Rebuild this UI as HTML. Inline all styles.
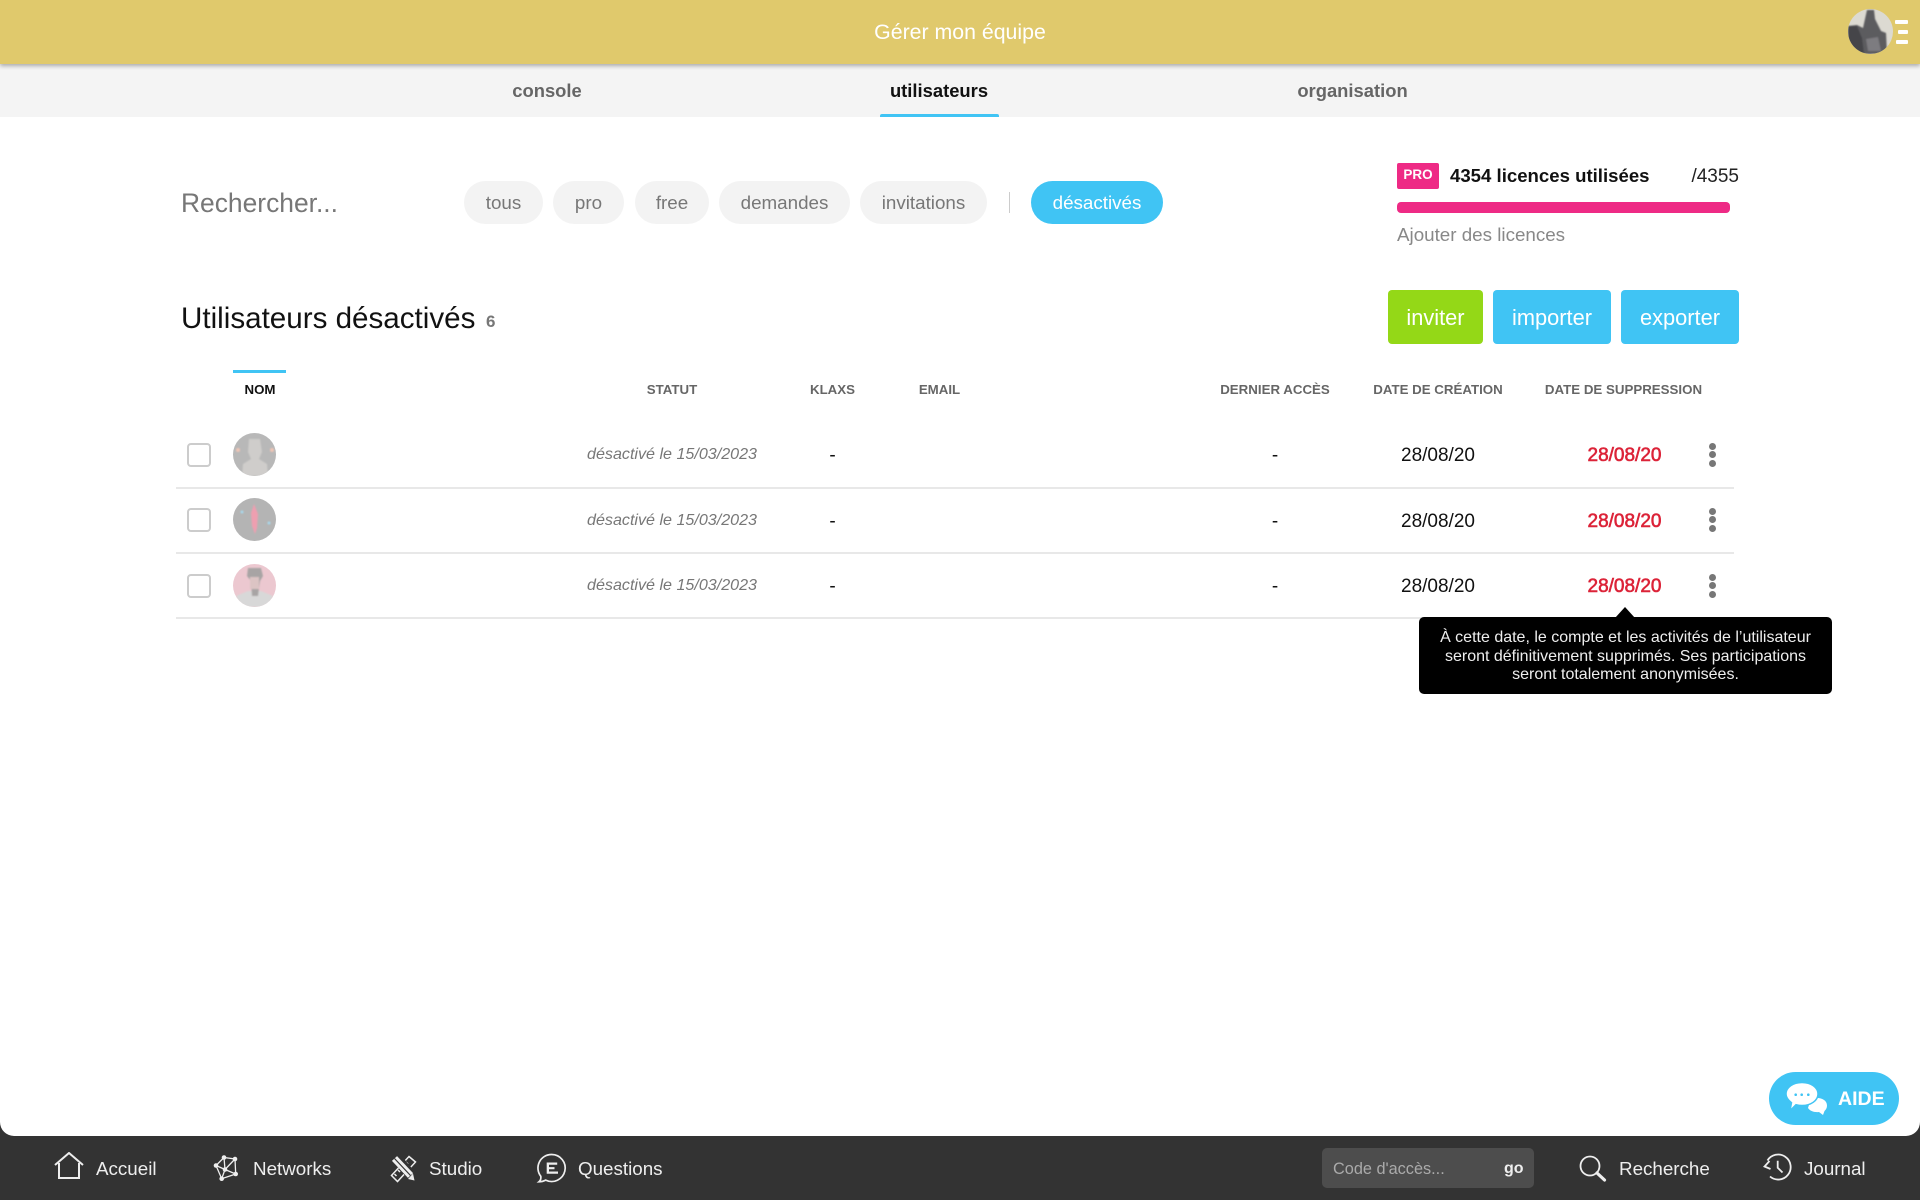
<!DOCTYPE html>
<html lang="fr"><head><meta charset="utf-8"><title>Gérer mon équipe</title>
<style>
html,body{margin:0;padding:0;width:1920px;height:1200px;overflow:hidden;background:#333}
body{position:relative;font-family:"Liberation Sans",sans-serif}
*{box-sizing:border-box}
.a{position:absolute;white-space:nowrap}
.t{position:absolute;white-space:nowrap;height:30px;line-height:30px}
.c{transform:translateX(-50%)}
.pill{position:absolute;top:181px;height:43px;border-radius:22px;background:#f3f3f3;color:#777;font-size:18.800px;line-height:44px;text-align:center}
.btn{position:absolute;top:290px;height:54px;border-radius:4px;background:#40c4f4;color:#fff;font-size:21.800px;line-height:55px;text-align:center}
.th{font-size:13.300px;font-weight:bold;color:#666}
.st{font-size:16.100px;font-style:italic;color:#777}
.d{font-size:19px;color:#111}
.r{font-size:19px;color:#dc2338;-webkit-text-stroke:.6px #dc2338}
.sep{position:absolute;left:176px;width:1558px;height:2px;background:#e8e8e8}
.cb{position:absolute;left:187px;width:24px;height:24px;border:2px solid #ccc;border-radius:4px;background:#fff}
.dot{position:absolute;left:1708.500px;width:7px;height:7px;border-radius:50%;background:#777}
.f{font-size:18.800px;color:#eee}
</style></head><body>
<div class="a" style="left:0;top:0;width:1920px;height:1136px;background:#fff;border-radius:0 0 14px 14px"></div>
<div class="a" style="left:0;top:64px;width:1920px;height:53px;background:#f4f4f4"></div>
<div class="a" style="left:0;top:0;width:1920px;height:64px;background:#e0c96c;box-shadow:0 2px 4px rgba(0,0,0,.3)"></div>
<div class="t c" style="left:960px;top:17px;font-size:21.300px;color:#fff">Gérer mon équipe</div>
<svg class="a" style="left:1848px;top:9px" width="45" height="45" viewBox="0 0 45 45"><defs><clipPath id="k"><circle cx="22.500" cy="22.500" r="22.500"/></clipPath><filter id="b"><feGaussianBlur stdDeviation=".7"/></filter></defs><g clip-path="url(#k)"><rect width="45" height="45" fill="#dcdad2"/><g filter="url(#b)"><path d="M19 1h7l1 9 6 12 5 2 1 21H0V17l9-1 6 3z" fill="#5c5b5f"/><path d="M0 17h9l5 12 2 16H0z" fill="#444448"/><path d="M18 30l12-2 3 14H20z" fill="#7d7c80"/></g></g></svg>
<div class="a" style="left:1895px;top:20px;width:13px;height:3.500px;background:#fff;border-radius:1px"></div>
<div class="a" style="left:1898px;top:30px;width:10px;height:3.500px;background:#fff;border-radius:1px"></div>
<div class="a" style="left:1896px;top:40px;width:12px;height:3.500px;background:#fff;border-radius:1px"></div>

<div class="t c" style="left:547px;top:76px;font-size:18.400px;font-weight:bold;color:#666">console</div>
<div class="t c" style="left:939px;top:76px;font-size:18.400px;font-weight:bold;color:#111">utilisateurs</div>
<div class="t c" style="left:1352.500px;top:76px;font-size:18.400px;font-weight:bold;color:#666">organisation</div>
<div class="a" style="left:880px;top:114px;width:119px;height:3px;background:#40c4f4;border-radius:2px 2px 0 0"></div>

<div class="t" style="left:181px;top:188px;font-size:26.400px;color:#777">Rechercher...</div>
<div class="pill" style="left:464px;width:79px">tous</div>
<div class="pill" style="left:553px;width:71px">pro</div>
<div class="pill" style="left:635px;width:74px">free</div>
<div class="pill" style="left:719px;width:131px">demandes</div>
<div class="pill" style="left:860px;width:127px">invitations</div>
<div class="a" style="left:1009px;top:192px;width:1px;height:21px;background:#ccc"></div>
<div class="pill" style="left:1031px;width:132px;background:#40c4f4;color:#fff">désactivés</div>

<div class="a" style="left:1397px;top:163px;width:42px;height:26px;background:#ee2a85;border-radius:2px;color:#fff;font-size:13.500px;font-weight:bold;line-height:24px;text-align:center">PRO</div>
<div class="t" style="left:1450px;top:161px;font-size:18.600px;font-weight:bold;color:#111">4354 licences utilisées</div>
<div class="t" style="right:181px;top:162px;font-size:19px;color:#222">/4355</div>
<div class="a" style="left:1397px;top:202px;width:333px;height:11px;background:#ee2a85;border-radius:4px"></div>
<div class="t" style="left:1397px;top:220px;font-size:18.800px;color:#888">Ajouter des licences</div>

<div class="t" style="left:181px;top:304px;font-size:29.600px;color:#111">Utilisateurs désactivés</div>
<div class="t" style="left:486px;top:307px;font-size:17px;font-weight:bold;color:#777">6</div>
<div class="btn" style="left:1388px;width:95px;background:#94d817">inviter</div>
<div class="btn" style="left:1493px;width:118px">importer</div>
<div class="btn" style="left:1621px;width:118px">exporter</div>

<div class="a" style="left:233px;top:370px;width:53px;height:3px;background:#40c4f4"></div>
<div class="t th c" style="left:260px;top:375px;color:#111">NOM</div>
<div class="t th c" style="left:672px;top:375px">STATUT</div>
<div class="t th c" style="left:832.500px;top:375px">KLAXS</div>
<div class="t th c" style="left:939.500px;top:375px">EMAIL</div>
<div class="t th c" style="left:1275px;top:375px">DERNIER ACCÈS</div>
<div class="t th c" style="left:1438px;top:375px">DATE DE CRÉATION</div>
<div class="t th c" style="left:1623.500px;top:375px">DATE DE SUPPRESSION</div>

<div class="cb" style="top:442.500px"></div>
<svg class="a" style="left:233px;top:433px" width="43" height="43" viewBox="0 0 43 43"><defs><clipPath id="v"><circle cx="21.500" cy="21.500" r="21.500"/></clipPath></defs><g clip-path="url(#v)"><rect width="43" height="43" fill="#b8b8b8"/><g filter="url(#b)"><path d="M16 6h11l2 13-3 7 8 5 1 12H9l1-12 8-5-3-7z" fill="#cfcdcb"/><circle cx="5" cy="17" r="2" fill="#eec5b5"/><circle cx="39" cy="17" r="2" fill="#eec5b5"/></g></g></svg>
<div class="t st c" style="left:672px;top:439px">désactivé le 15/03/2023</div>
<div class="t d c" style="left:832.500px;top:441px">-</div>
<div class="t d c" style="left:1275px;top:441px">-</div>
<div class="t d c" style="left:1438px;top:441px">28/08/20</div>
<div class="t r c" style="left:1624.500px;top:441px">28/08/20</div>
<div class="dot" style="top:443px"></div><div class="dot" style="top:451px"></div><div class="dot" style="top:459.500px"></div>
<div class="sep" style="top:487px"></div>

<div class="cb" style="top:508px"></div>
<svg class="a" style="left:233px;top:498px" width="43" height="43" viewBox="0 0 43 43"><circle cx="21.500" cy="21.500" r="21.500" fill="#b4b4b4"/><g filter="url(#b)"><path d="M21 6l4 10-1 14-2 6-3-8-1-13z" fill="#ee9fb0"/><circle cx="9" cy="14" r="1.500" fill="#a8d8ec"/><circle cx="36" cy="25" r="1.500" fill="#a8d8ec"/></g></svg>
<div class="t st c" style="left:672px;top:505px">désactivé le 15/03/2023</div>
<div class="t d c" style="left:832.500px;top:507px">-</div>
<div class="t d c" style="left:1275px;top:507px">-</div>
<div class="t d c" style="left:1438px;top:507px">28/08/20</div>
<div class="t r c" style="left:1624.500px;top:507px">28/08/20</div>
<div class="dot" style="top:508px"></div><div class="dot" style="top:516px"></div><div class="dot" style="top:524.500px"></div>
<div class="sep" style="top:552px"></div>

<div class="cb" style="top:573.500px"></div>
<svg class="a" style="left:233px;top:564px" width="43" height="43" viewBox="0 0 43 43"><g clip-path="url(#v)"><rect width="43" height="43" fill="#ecc8d0"/><g filter="url(#b)"><path d="M3 32l12-5h13l12 5-5 11H8z" fill="#d8d8d8"/><path d="M15 4h13l2 8-3 5-2 15h-6l-1-15-4-5z" fill="#a8a4a4"/><path d="M17 13h9v12h-9z" fill="#dcc4c4"/></g></g></svg>
<div class="t st c" style="left:672px;top:570px">désactivé le 15/03/2023</div>
<div class="t d c" style="left:832.500px;top:572px">-</div>
<div class="t d c" style="left:1275px;top:572px">-</div>
<div class="t d c" style="left:1438px;top:572px">28/08/20</div>
<div class="t r c" style="left:1624.500px;top:572px">28/08/20</div>
<div class="dot" style="top:574px"></div><div class="dot" style="top:582px"></div><div class="dot" style="top:590.500px"></div>
<div class="sep" style="top:617px"></div>

<svg class="a" style="left:1615px;top:607px" width="20" height="11"><path d="M10 0L20 11H0z" fill="#000"/></svg>
<div class="a" style="left:1419px;top:617px;width:413px;height:77px;background:#000;border-radius:5px;color:#eee;font-size:16px;line-height:18.700px;text-align:center;padding-top:12px">À cette date, le compte et les activités de l’utilisateur<br>seront définitivement supprimés. Ses participations<br>seront totalement anonymisées.</div>

<div class="a" style="left:1769px;top:1072px;width:130px;height:53px;background:#40c4f4;border-radius:27px"></div>
<svg class="a" style="left:1775px;top:1072px" width="60" height="50" viewBox="0 0 60 50"><path d="M36 26.500c8-2 16 .5 16 7 0 2.500-1 4-2.500 5.500l-1.500 4-4-3c-5 .5-9-1-11-4z" fill="#fff"/><path d="M27 10.500c9 0 16 5 16 11.500s-7 11.500-16 11.500c-2 0-4-.3-6-.8l-6 6 1.500-8C13 28 11 25 11 22c0-6.500 7-11.500 16-11.500z" fill="#fff" stroke="#40c4f4" stroke-width="1.500"/><circle cx="20.700" cy="22.700" r="1.300" fill="#40c4f4"/><circle cx="26.700" cy="22.700" r="1.300" fill="#40c4f4"/><circle cx="33.300" cy="22.700" r="1.300" fill="#40c4f4"/></svg>
<div class="t" style="left:1838px;top:1084px;font-size:19.500px;font-weight:bold;color:#fff">AIDE</div>

<svg class="a" style="left:54px;top:1152px;fill:none;stroke:#eee;stroke-width:2" width="30" height="27" viewBox="0 0 30 27"><path d="M1 13L15 1l14 12M5 11v15h20V11"/></svg>
<div class="t f" style="left:96px;top:1154px">Accueil</div>
<svg class="a" style="left:205px;top:1148px" width="40" height="40" viewBox="0 0 40 40"><g fill="none" stroke="#eee" stroke-width="1.300"><path d="M19 9.500L30 11l.7 15L16.700 30.700 11 17.500zM19 9.500L20 21.500M30 11L20 21.500M11 17.500L20 21.500L30.700 26M20 21.500L16.700 30.700"/></g><g fill="#eee"><circle cx="19" cy="9.500" r="2.300"/><circle cx="30" cy="11" r="2.300"/><circle cx="11" cy="17.500" r="2.300"/><circle cx="20" cy="21.500" r="2.300"/><circle cx="30.700" cy="26" r="2.300"/><circle cx="16.700" cy="30.700" r="2.300"/></g></svg>
<div class="t f" style="left:253px;top:1154px">Networks</div>
<svg class="a" style="left:390px;top:1148px" width="35" height="40" viewBox="185 0 35 40"><g fill="none" stroke="#eee" stroke-width="1.500"><path d="M204 8.500l6.500 5.500-18 19.500-6-6z"/><path d="M201 14l2 2M197 18l2 2M193 22l2 2M189.500 26l2 2"/></g><path d="M190 8L206 27" stroke="#333" stroke-width="10"/><path d="M189.500 10.500L205.500 27.500" stroke="#eee" stroke-width="7"/><path d="M189.500 10.500L205.500 27.500" stroke="#333" stroke-width="1.200"/><path d="M203 31l5-5.500 1.500 7z" fill="#eee"/></svg>
<div class="t f" style="left:429px;top:1154px">Studio</div>
<svg class="a" style="left:530px;top:1148px" width="50" height="40" viewBox="0 0 50 40"><path d="M21.700 6.500a13.500 13.500 0 1 1-6 25.600Q12.500 33.800 9 33.800q2.300-1.800 1.800-5.500A13.500 13.500 0 0 1 21.700 6.500z" fill="none" stroke="#eee" stroke-width="1.700"/><path d="M16.700 15h10.500v2.200H19v2.400h5.500v2.200H19V24h9v2.200H16.700z" fill="#eee" transform="translate(0 -.5)"/></svg>
<div class="t f" style="left:578px;top:1154px">Questions</div>

<div class="a" style="left:1322px;top:1148px;width:212px;height:40px;background:#4d4d4d;border-radius:5px"></div>
<div class="t" style="left:1333px;top:1154px;font-size:16.300px;color:#aaa">Code d'accès...</div>
<div class="t" style="left:1504px;top:1154px;font-size:16px;font-weight:bold;color:#eee">go</div>
<svg class="a" style="left:1579px;top:1155px;fill:none;stroke:#eee" width="28" height="27" viewBox="0 0 28 27"><circle cx="11" cy="11" r="9.500" stroke-width="1.800"/><path d="M18 18l7.500 7" stroke-width="3.200" stroke-linecap="round"/></svg>
<div class="t f" style="left:1619px;top:1154px">Recherche</div>
<svg class="a" style="left:1755px;top:1148px;fill:none;stroke:#eee;stroke-width:1.800" width="45" height="40" viewBox="0 0 45 40"><path d="M12.500 12.500A12.500 12.500 0 1 1 15 28.500"/><path d="M14.500 13L9.500 18.500 15.500 21"/><path d="M22.700 12.700v7l4.800 4.800"/></svg>
<div class="t f" style="left:1804px;top:1154px">Journal</div>
</body></html>
